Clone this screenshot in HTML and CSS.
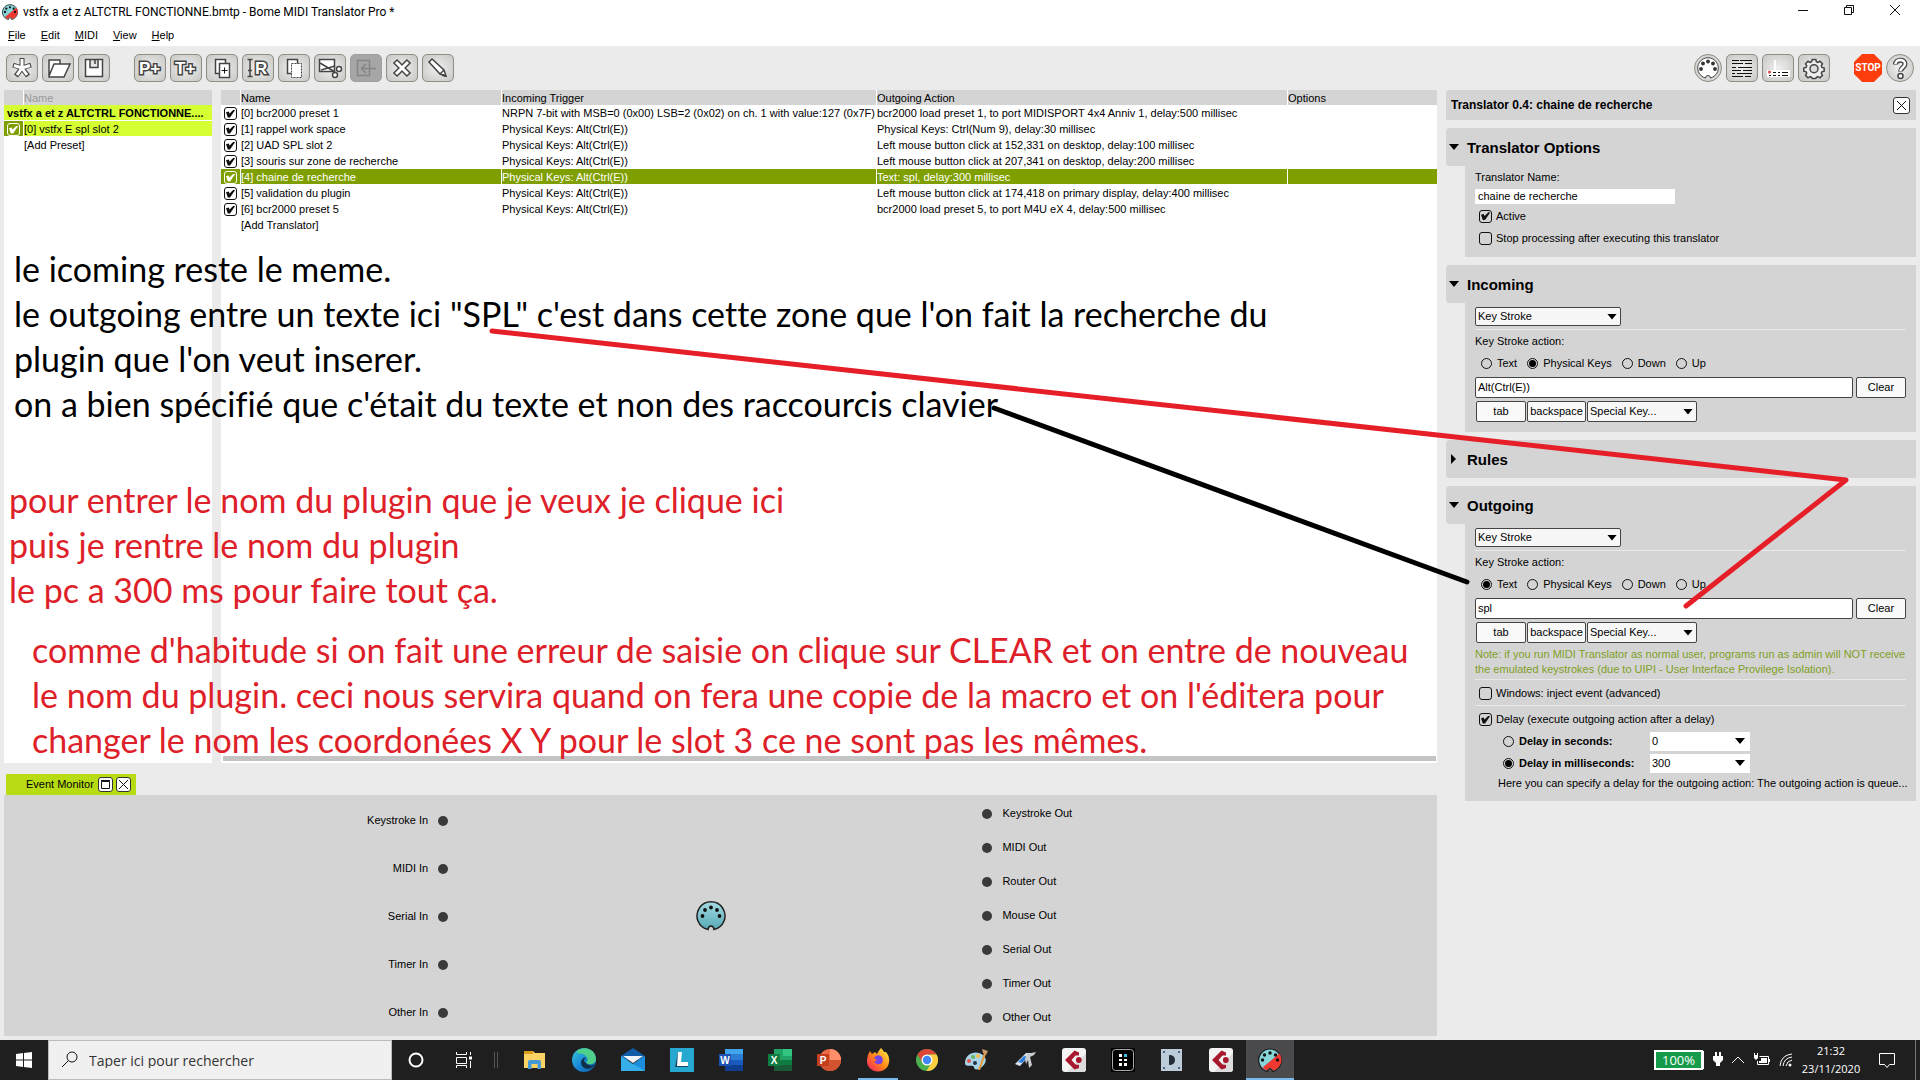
FILE: index.html
```html
<!DOCTYPE html>
<html lang="fr">
<head>
<meta charset="utf-8">
<title>Bome MIDI Translator Pro</title>
<link rel="stylesheet" href="styles.css">
</head>
<body>
<svg class="defs" width="0" height="0" aria-hidden="true">
  <defs>
    <linearGradient id="teal" x1="0" y1="0" x2="0" y2="1"><stop offset="0" stop-color="#a5dbe2"/><stop offset="1" stop-color="#55a9b5"/></linearGradient>
    <linearGradient id="edge" x1="0" y1="0" x2="1" y2="1"><stop offset="0" stop-color="#38c8d8"/><stop offset=".5" stop-color="#1b8ad6"/><stop offset="1" stop-color="#0c59a4"/></linearGradient>
    <linearGradient id="fox" x1="1" y1="0" x2="0" y2="1"><stop offset="0" stop-color="#fff44f"/><stop offset=".5" stop-color="#ff8a16"/><stop offset="1" stop-color="#f5156c"/></linearGradient>
    <symbol id="bome" viewBox="0 0 24 24">
      <path d="M9.500 23.300A11.300 11.300 0 1 1 14.500 23.300Q14.500 20.500 12 20.500T9.500 23.300Z" fill="#86d5d9" stroke="#1a1a1a" stroke-width="1.200"/>
      <path d="M21.500 5.500A11 11 0 0 1 14.800 22.500Q14.500 20 12 20T9.200 22.500A11 11 0 0 1 4.500 19.500Z" fill="#ee3830"/>
      <g fill="#111"><circle cx="12" cy="5" r="1.700"/><circle cx="6.500" cy="7" r="1.700"/><circle cx="17.500" cy="7" r="1.700"/><circle cx="4.500" cy="12" r="1.700"/><circle cx="19.500" cy="12" r="1.700"/></g>
    </symbol>
    <symbol id="cubase" viewBox="0 0 24 24">
      <rect width="24" height="24" rx="3" fill="#f4f4f4"/><path d="M24 5V21a3 3 0 0 1-3 3H5Z" fill="#dcdcdc"/>
      <path d="M12.500 2.500 17 4.500V7.500L13.500 7.500 9.500 12 13.500 16.500 17 17V20L12.500 21.500 3 12Z" fill="#a8182f"/><circle cx="16.800" cy="12" r="2.900" fill="#a8182f"/>
    </symbol>
  </defs>
</svg>
<div class="app">
  <header class="titlebar">
    <svg class="logo" width="16" height="18"><use href="#bome"/></svg>
    <h1 class="window-title">vstfx a et z ALTCTRL FONCTIONNE.bmtp - Bome MIDI Translator Pro *</h1>
    <div class="window-buttons">
      <button type="button" aria-label="Minimize"><svg width="10" height="10"><path d="M0 5.500H10" class="thin"/></svg></button>
      <button type="button" aria-label="Restore"><svg width="10" height="10"><path d="M.5 2.500H7.500V9.500H.5ZM2.500 2V.5H9.500V7.500H8" class="thin"/></svg></button>
      <button type="button" aria-label="Close"><svg width="10" height="10"><path d="M0 0 10 10M10 0 0 10" class="thin"/></svg></button>
    </div>
  </header>
  <nav class="menubar">
    <a href="#"><u>F</u>ile</a><a href="#"><u>E</u>dit</a><a href="#"><u>M</u>IDI</a><a href="#"><u>V</u>iew</a><a href="#"><u>H</u>elp</a>
  </nav>
  <div class="toolbar">
    <div class="tools">
      <button type="button" class="tool" aria-label="New"><svg width="30" height="26"><path d="M15 3V13L6 10M15 13 24 10M15 13 9 21M15 13 21 21" fill="none" stroke="#444" stroke-width="5"/><path d="M15 4V13L7 10.500M15 13 23 10.500M15 13 10 20M15 13 20 20" fill="none" stroke="#fff" stroke-width="3"/></svg></button>
      <button type="button" class="tool" aria-label="Open"><svg width="30" height="26"><path d="M6 21V5H17V9M6 21 11 9H27L21 22H6Z" class="ico"/></svg></button>
      <button type="button" class="tool" aria-label="Save"><svg width="30" height="26"><path d="M6.500 4.500H23.500V21.500H6.500ZM11 4.500V12.500H19V4.500M16 5V9" class="ico"/></svg></button>
    </div>
    <div class="tools">
      <button type="button" class="tool" aria-label="Add preset"><svg width="30" height="26"><text x="4" y="19" class="glyph">P+</text></svg></button>
      <button type="button" class="tool" aria-label="Add translator"><svg width="30" height="26"><text x="4" y="19" class="glyph">T+</text></svg></button>
      <button type="button" class="tool" aria-label="Duplicate"><svg width="30" height="26"><path d="M8.500 4.500H18.500V18.500H8.500Z" class="ico"/><path d="M12.500 8.500H22.500V22.500H12.500Z" class="ico"/><path d="M14.500 15.500H20.500M17.500 12.500V18.500" class="thin"/></svg></button>
      <button type="button" class="tool" aria-label="Rename"><svg width="30" height="26"><path d="M4.500 4.500H9.500M7 5V21M4.500 21.500H9.500M5 15.500H9" class="ico"/><text x="12" y="19" class="glyph">R</text></svg></button>
      <button type="button" class="tool" aria-label="Copy"><svg width="30" height="26"><path d="M8.500 4.500H18.500V18.500H8.500Z" class="ico"/><path d="M12.500 8.500H22.500V22.500H12.500Z" fill="#fff" stroke="#444" stroke-dasharray="2 1"/></svg></button>
      <button type="button" class="tool" aria-label="Cut"><svg width="30" height="26"><path d="M4.500 4.500H19.500V16.500H4.500Z" class="ico"/><path d="M5 8 20 17M6 15 20 11" class="ico"/><circle cx="24" cy="14" r="2.500" class="ico"/><circle cx="20" cy="20" r="2.500" class="ico"/></svg></button>
      <button type="button" class="tool off" aria-label="Paste" disabled><svg width="30" height="26"><path d="M6.500 5.500H18.500V20.500H6.500ZM10 13.500H25M15 9 10.500 13.500 15 18" fill="none" stroke="#858585" stroke-width="1.500"/></svg></button>
      <button type="button" class="tool" aria-label="Delete"><svg width="30" height="26"><path d="M8 6 22 20M22 6 8 20" stroke="#444" stroke-width="6"/><path d="M9 7 21 19M21 7 9 19" stroke="#fff" stroke-width="3"/></svg></button>
      <button type="button" class="tool" aria-label="Edit"><svg width="30" height="26"><path d="M6 7 9 4 21 15 23 21 17 19ZM17 19 21 15" class="ico"/><path d="M20 19 24 22 19 21Z" fill="#333"/></svg></button>
    </div>
    <div class="tools end">
      <button type="button" class="tool round" aria-label="MIDI ports"><svg width="26" height="26"><path d="M10.500 23A10.300 10.300 0 1 1 15.500 23Q15.500 20.500 13 20.500T10.500 23Z" fill="#fff" stroke="#444"/><g fill="#333"><circle cx="13" cy="6.500" r="1.900"/><circle cx="8" cy="8.500" r="1.900"/><circle cx="18" cy="8.500" r="1.900"/><circle cx="6" cy="14" r="1.900"/><circle cx="20" cy="14" r="1.900"/></g></svg></button>
      <button type="button" class="tool" aria-label="Log"><svg width="30" height="26"><path d="M5 5.500H12M13 5.500H25M5 8.500H16M18 8.500H25M5 12.500H9M11 12.500H25M5 15.500H14M16 15.500H25M5 18.500H8M10 18.500H25M5 21.500H16M18 21.500H24" class="thin"/></svg></button>
      <button type="button" class="tool" aria-label="Router"><svg width="30" height="26"><path d="M11 5H13V15H27V22H4V15H11Z" fill="#fff"/><circle cx="6.500" cy="17" r="1.500" fill="#d44"/><path d="M6 20.500H8M10 17.500H13M15 17.500H17M19 17.500H25M10 20.500H13M15 20.500H17M19 20.500H25" class="thin"/></svg></button>
      <button type="button" class="tool" aria-label="Settings"><svg width="30" height="26"><path d="M13.200 4.500h3.600l.6 2.300 1.500.7 2.100-1.200 2.500 2.500-1.200 2.100.7 1.500 2.200.6v3.200l-2.300.6-.6 1.500 1.200 2.100-2.500 2.500-2.100-1.200-1.500.6-.6 1.200h-3.600l-.6-1.200-1.500-.6-2.100 1.200-2.500-2.500 1.200-2.100-.6-1.500-2.300-.6v-3.200l2.300-.6.6-1.500-1.200-2.100 2.500-2.500 2.100 1.200 1.500-.7Z" fill="#eee" stroke="#444" stroke-width="1.500"/><circle cx="15" cy="13.700" r="4" fill="#ddd" stroke="#444" stroke-width="1.500"/></svg></button>
    </div>
    <div class="tools stops">
      <button type="button" class="stop">STOP</button>
      <button type="button" class="tool round" aria-label="Help"><svg width="26" height="26"><g fill="none"><path d="M8.500 9.500C8.500 3.500 18 4 18 9 18 12.500 13.500 12.500 13.500 16.500" stroke="#444" stroke-width="5"/><path d="M8.500 9C8.500 3.500 18 4 18 9 18 12.500 13.500 12.500 13.500 16" stroke="#fff" stroke-width="2.500"/></g><circle cx="13.500" cy="21" r="2.500" class="ico"/></svg></button>
    </div>
  </div>

  <div class="workspace">
    <div class="center">
      <div class="lists">
        <section class="pane presets">
          <table class="grid">
            <colgroup><col class="c-check"><col></colgroup>
            <thead><tr><th></th><th class="dim">Name</th></tr></thead>
            <tbody>
              <tr class="project"><td colspan="2">vstfx a et z ALTCTRL FONCTIONNE....</td></tr>
              <tr class="current"><td class="tick"><input type="checkbox" class="box" aria-label="vstfx E spl slot 2" checked></td><td>[0] vstfx E spl slot 2</td></tr>
              <tr><td></td><td>[Add Preset]</td></tr>
            </tbody>
          </table>
        </section>
        <section class="pane translators">
          <table class="grid">
            <colgroup><col class="c-check"><col class="c-name"><col class="c-in"><col class="c-out"><col></colgroup>
            <thead><tr><th></th><th>Name</th><th>Incoming Trigger</th><th>Outgoing Action</th><th>Options</th></tr></thead>
            <tbody>
              <tr><td class="tick"><input type="checkbox" class="box" aria-label="0" checked></td><td>[0] bcr2000 preset 1</td><td>NRPN 7-bit with MSB=0 (0x00) LSB=2 (0x02) on ch. 1 with value:127 (0x7F)</td><td>bcr2000 load preset 1, to port MIDISPORT 4x4 Anniv 1, delay:500 millisec</td><td></td></tr>
              <tr><td class="tick"><input type="checkbox" class="box" aria-label="1" checked></td><td>[1] rappel work space</td><td>Physical Keys: Alt(Ctrl(E))</td><td>Physical Keys: Ctrl(Num 9), delay:30 millisec</td><td></td></tr>
              <tr><td class="tick"><input type="checkbox" class="box" aria-label="2" checked></td><td>[2] UAD SPL slot 2</td><td>Physical Keys: Alt(Ctrl(E))</td><td>Left mouse button click at 152,331 on desktop, delay:100 millisec</td><td></td></tr>
              <tr><td class="tick"><input type="checkbox" class="box" aria-label="3" checked></td><td>[3] souris sur zone de recherche</td><td>Physical Keys: Alt(Ctrl(E))</td><td>Left mouse button click at 207,341 on desktop, delay:200 millisec</td><td></td></tr>
              <tr class="selected"><td class="tick"><input type="checkbox" class="box" aria-label="4" checked></td><td>[4] chaine de recherche</td><td>Physical Keys: Alt(Ctrl(E))</td><td>Text: spl, delay:300 millisec</td><td></td></tr>
              <tr><td class="tick"><input type="checkbox" class="box" aria-label="5" checked></td><td>[5] validation du plugin</td><td>Physical Keys: Alt(Ctrl(E))</td><td>Left mouse button click at 174,418 on primary display, delay:400 millisec</td><td></td></tr>
              <tr><td class="tick"><input type="checkbox" class="box" aria-label="6" checked></td><td>[6] bcr2000 preset 5</td><td>Physical Keys: Alt(Ctrl(E))</td><td>bcr2000 load preset 5, to port M4U eX 4, delay:500 millisec</td><td></td></tr>
              <tr><td></td><td>[Add Translator]</td><td></td><td></td><td></td></tr>
            </tbody>
          </table>
          <div class="hscroll"></div>
        </section>
      </div>
      <section class="monitor">
        <div class="tab">
          <h2>Event Monitor</h2>
          <button type="button" class="mini" aria-label="Maximize"><svg width="13" height="13"><path d="M2.500 3.500H10.500V10.500H2.500ZM2 2.500H11" class="thin"/></svg></button>
          <button type="button" class="mini" aria-label="Close monitor"><svg width="13" height="13"><path d="M2 2 11 11M11 2 2 11" class="thin"/></svg></button>
        </div>
        <div class="events">
          <ul class="ins"><li>Keystroke In</li><li>MIDI In</li><li>Serial In</li><li>Timer In</li><li>Other In</li></ul>
          <svg class="din" width="30" height="30"><path d="M12 28.500A14 14 0 1 1 18 28.500Q17.500 25 15 25T12 28.500Z" fill="url(#teal)" stroke="#222" stroke-width="1.500"/><g fill="#111"><circle cx="15" cy="6.500" r="1.900"/><circle cx="9" cy="9" r="1.900"/><circle cx="21" cy="9" r="1.900"/><circle cx="6.500" cy="15" r="1.900"/><circle cx="23.500" cy="15" r="1.900"/></g></svg>
          <ul class="outs"><li>Keystroke Out</li><li>MIDI Out</li><li>Router Out</li><li>Mouse Out</li><li>Serial Out</li><li>Timer Out</li><li>Other Out</li></ul>
        </div>
      </section>
    </div>

    <aside class="inspector">
      <div class="crumb"><h2>Translator 0.4: chaine de recherche</h2><button type="button" class="mini big" aria-label="Close panel"><svg width="15" height="15"><path d="M3 3 12 12M12 3 3 12" class="thin"/></svg></button></div>

      <section class="card">
        <h3>Translator Options</h3>
        <div class="card-body options">
          <label class="name-label" for="tname">Translator Name:</label>
          <input class="name-input" id="tname" type="text" value="chaine de recherche">
          <label class="line check"><input type="checkbox" class="box" checked>Active</label>
          <label class="line check"><input type="checkbox" class="box">Stop processing after executing this translator</label>
        </div>
      </section>

      <section class="card">
        <h3>Incoming</h3>
        <div class="card-body">
          <div class="drop kind"><select aria-label="Incoming type"><option>Key Stroke</option></select></div>
          <div class="rule action">Key Stroke action:</div>
          <div class="line radios">
            <label><input type="radio" name="in" class="dot">Text</label><label><input type="radio" name="in" class="dot" checked>Physical Keys</label><label><input type="radio" name="in" class="dot">Down</label><label><input type="radio" name="in" class="dot">Up</label>
          </div>
          <div class="keys"><input type="text" aria-label="Incoming keys" value="Alt(Ctrl(E))"><button type="button" class="btn">Clear</button></div>
          <div class="specials"><button type="button" class="btn">tab</button><button type="button" class="btn wide">backspace</button><div class="drop special"><select aria-label="Incoming special key"><option>Special Key...</option></select></div></div>
        </div>
      </section>

      <section class="card closed"><h3>Rules</h3></section>

      <section class="card">
        <h3>Outgoing</h3>
        <div class="card-body">
          <div class="drop kind"><select aria-label="Outgoing type"><option>Key Stroke</option></select></div>
          <div class="rule action">Key Stroke action:</div>
          <div class="line radios">
            <label><input type="radio" name="out" class="dot" checked>Text</label><label><input type="radio" name="out" class="dot">Physical Keys</label><label><input type="radio" name="out" class="dot">Down</label><label><input type="radio" name="out" class="dot">Up</label>
          </div>
          <div class="keys"><input type="text" aria-label="Outgoing keys" value="spl"><button type="button" class="btn">Clear</button></div>
          <div class="specials"><button type="button" class="btn">tab</button><button type="button" class="btn wide">backspace</button><div class="drop special"><select aria-label="Outgoing special key"><option>Special Key...</option></select></div></div>
          <p class="note">Note: if you run MIDI Translator as normal user, programs run as admin will NOT receive<br>the emulated keystrokes (due to UIPI - User Interface Provilege Isolation).</p>
          <div class="rule inject"><label class="check"><input type="checkbox" class="box">Windows: inject event (advanced)</label></div>
          <div class="rule delay"><label class="check"><input type="checkbox" class="box" checked>Delay (execute outgoing action after a delay)</label></div>
          <div class="line delay-row"><label><input type="radio" name="delay" class="dot">Delay in seconds:</label><div class="drop plain"><select aria-label="Seconds"><option>0</option></select></div></div>
          <div class="line delay-row"><label><input type="radio" name="delay" class="dot" checked>Delay in milliseconds:</label><div class="drop plain"><select aria-label="Milliseconds"><option>300</option></select></div></div>
          <p class="hint">Here you can specify a delay for the outgoing action: The outgoing action is queue...</p>
        </div>
      </section>
    </aside>
  </div>

  <footer class="taskbar">
    <button type="button" class="task" aria-label="Start"><svg width="16" height="16" fill="#fff"><path d="M0 2 7 1V7.500H0ZM8 1 16 0V7.500H8ZM0 8.500H7V15L0 14ZM8 8.500H16V16L8 15Z"/></svg></button>
    <label class="search"><svg width="18" height="18"><circle cx="11" cy="6" r="5" class="thin"/><path d="M7.500 9.500 1 16" class="thin"/></svg><input type="text" placeholder="Taper ici pour rechercher" aria-label="Taper ici pour rechercher"></label>
    <button type="button" class="task" aria-label="Cortana"><svg width="16" height="16"><circle cx="8" cy="8" r="6.500" fill="none" stroke="#fff" stroke-width="2"/></svg></button>
    <button type="button" class="task" aria-label="Task view"><svg width="16" height="16" fill="none" stroke="#fff"><path d="M.5 0V2.500H10.500V0M.5 5.500H10.500V11.500H.5ZM.5 16V13.500H10.500V16M14.500 0V3M14.500 9V16"/><path d="M13 6H16" stroke-width="3"/></svg></button>
    <span class="grip"></span>
    <div class="apps">
      <button type="button" class="task" aria-label="Explorer"><svg width="24" height="24"><path d="M1 3H10L12 5H22V20H1Z" fill="#fbd264"/><path d="M1 3H10V6H1Z" fill="#dc9c1c"/><path d="M5 21V14Q5 12 7 12H16Q18 12 18 14V21H14.500V16H8.500V21Z" fill="#4599d6"/></svg></button>
      <button type="button" class="task" aria-label="Edge"><svg width="24" height="24"><circle cx="12" cy="12" r="12" fill="url(#edge)"/><path d="M5 3C12-3 24 1 24 11 24 17 16 17 14 15 18 11 14 5 5 5Z" fill="#4fd08a"/><path d="M14 15C16 18 21 18 23 16 20 23 10 22 9 15 9 11 12 9 14 10 11 12 12 14 14 15Z" fill="#10304a"/></svg></button>
      <button type="button" class="task" aria-label="Mail"><svg width="24" height="24"><path d="M0 8 12 0 24 8V12H0Z" fill="#0f5ca8"/><path d="M0 8 12 16 24 8V23H0Z" fill="#36aee9"/><path d="M12 16 24 8V23Z" fill="#1d8edb"/><path d="M2 8H22L12 15Z" fill="#f0f4f8"/></svg></button>
      <button type="button" class="task" aria-label="L"><svg width="24" height="24"><path d="M0 0H24V24H0Z" fill="#27a8d0"/><path d="M8 4 5 19H18V15L12 18Z" fill="#12486a"/><path d="M8 4H12L11 14H18V18H7Z" fill="#fff"/></svg></button>
      <button type="button" class="task" aria-label="Word"><svg width="24" height="24"><path d="M6 1H24V23H6Z" fill="#2b7cd3"/><path d="M6 1H24V6H6Z" fill="#41a5ee"/><path d="M6 12H24V17H6Z" fill="#185abd"/><path d="M6 17H24V23H6Z" fill="#103f91"/><path d="M0 6H12V18H0Z" fill="#1b52b0"/><text x="6" y="16" class="office">W</text></svg></button>
      <button type="button" class="task" aria-label="Excel"><svg width="24" height="24"><path d="M6 1H24V23H6Z" fill="#21a366"/><path d="M15 1H24V8H15Z" fill="#33c481"/><path d="M6 12H24V17H6Z" fill="#107c41"/><path d="M6 17H24V23H6Z" fill="#185c37"/><path d="M0 6H12V18H0Z" fill="#107c41"/><text x="6" y="16" class="office">X</text></svg></button>
      <button type="button" class="task" aria-label="PowerPoint"><svg width="24" height="24"><circle cx="13" cy="12" r="11" fill="#ed6c47"/><path d="M13 1A11 11 0 0 1 24 12H13Z" fill="#ff8f6b"/><path d="M24 12A11 11 0 0 1 2 12Z" fill="#d35230"/><path d="M0 6H12V18H0Z" fill="#c43e1c"/><text x="6" y="16" class="office">P</text></svg></button>
      <button type="button" class="task open" aria-label="Firefox"><svg width="24" height="24"><path d="M1 12Q1 7 4 3L6 6 9 4 11 6Q13 2 15 0 17 2 18 4L20 4Q24 9 23 14A11 10 0 0 1 1 13Z" fill="url(#fox)"/><path d="M8 10Q10 6 15 8 18 11 16 15 12 18 8 14L11 12Z" fill="#7542e5"/></svg></button>
      <button type="button" class="task" aria-label="Chrome"><svg width="24" height="24"><circle cx="12" cy="12" r="11" fill="#4caf50"/><path d="M2.500 6.500A11 11 0 0 1 21.500 6.500H12L7.500 14.500Z" fill="#db4437"/><path d="M21.500 6.500A11 11 0 0 1 11.500 23L16.500 14.500 14.500 6.500Z" fill="#ffcd40"/><circle cx="12" cy="12" r="5.500" fill="#fff"/><circle cx="12" cy="12" r="4.200" fill="#4285f4"/></svg></button>
      <button type="button" class="task" aria-label="Paint"><svg width="24" height="24"><path d="M1 15C1 7 9 3 15 5 22 7 24 13 19 18 14 23 10 22 10 19 9 16 1 20 1 15Z" fill="#a9d5ea"/><circle cx="5" cy="13" r="2" fill="#e2574c"/><circle cx="9" cy="9" r="2" fill="#6cb85c"/><circle cx="14" cy="8" r="2" fill="#f3c04b"/><circle cx="11" cy="15" r="2" fill="#234"/><path d="M14 22 20 5 22 6 16 22Z" fill="#e59a3c"/><path d="M18 1 24 3 22 7 19 5Z" fill="#c99a6b"/></svg></button>
      <button type="button" class="task" aria-label="Tools"><svg width="24" height="24"><path d="M2 16 13 5 18 5 16 8 7 18Z" fill="#d7e2ee"/><path d="M5 14 11 8 15 9 9 15Z" fill="#2d7ed8"/><path d="M14 6 23 4 21 7 17 9 19 17 16 20 15 12 13 16 12 11Z" fill="#c9cdd2"/></svg></button>
      <button type="button" class="task" aria-label="Cubase"><svg width="24" height="24"><use href="#cubase"/></svg></button>
      <button type="button" class="task" aria-label="Pads"><svg width="24" height="24"><path d="M0 0H24V24H0Z" fill="#000"/><rect x="1.500" y="1.500" width="21" height="21" rx="3" fill="none" stroke="#aaa"/><path d="M8 6H11V9H8ZM8 11H11V13H8ZM13 11H16V13H13ZM8 15H11V18H8ZM13 15H16V18H13Z" fill="#fff"/><path d="M13 6H16V9H13Z" fill="#3ac0dd"/></svg></button>
      <button type="button" class="task" aria-label="D"><svg width="24" height="24"><path d="M1 1H22V23H1Z" fill="#bccbd9"/><path d="M9 7Q15 7 15 12T9 17Z" fill="#222c38"/><g fill="#345"><circle cx="4" cy="4" r="1"/><circle cx="19" cy="4" r="1"/><circle cx="4" cy="20" r="1"/><circle cx="19" cy="20" r="1"/></g></svg></button>
      <button type="button" class="task" aria-label="Cubase 2"><svg width="24" height="24"><use href="#cubase"/></svg></button>
      <button type="button" class="task active" aria-label="Bome MIDI Translator"><svg width="24" height="24"><use href="#bome"/></svg></button>
    </div>
    <div class="tray">
      <span class="battery">100%</span>
      <svg width="10" height="16" fill="#fff"><path d="M2 0H4V4H6V0H8V4H10V8L7 11V14H3V11L0 8V4H2Z"/></svg>
      <svg width="14" height="8"><path d="M1 7 7 1 13 7" class="lite"/></svg>
      <svg width="18" height="14"><path d="M6.500 3.500H15.500V11.500H4.500V8" class="lite"/><path d="M8 5H14V10H6V8H8ZM16 6H17V9H16ZM1 2H5V5L3 7 1 5Z" fill="#fff"/><path d="M1.500 0V3M4.500 0V3" class="lite"/></svg>
      <svg width="14" height="14"><path d="M1 13Q2 2 13 1M4 13Q5 5 13 4M7 13Q8 8 13 7" class="lite"/><circle cx="11" cy="12" r="1.500" fill="#fff"/></svg>
      <time class="clock">21:32<br>23/11/2020</time>
      <svg class="bell" width="16" height="17"><path d="M.5 1.500H15.500V12.500H10.500L8 15.500 5.500 12.500H.5Z" class="lite"/></svg>
      <span class="peek"></span>
    </div>
  </footer>

  <div class="notes">
    <svg class="arrows"><g fill="none" stroke-width="5" stroke-linecap="round" stroke-linejoin="round"><path d="M492 331 1846 480 1686 606" stroke="#e61e28"/><path d="M994 408 1467 582" stroke="#000"/></g></svg>
    <p class="memo m1">le icoming reste le meme.<br>le outgoing entre un texte ici "SPL" c'est dans cette zone que l'on fait la recherche du<br>plugin que l'on veut inserer.<br>on a bien spécifié que c'était du texte et non des raccourcis clavier</p>
    <p class="memo red m2">pour entrer le nom du plugin que je veux je clique ici<br>puis je rentre le nom du plugin<br>le pc a 300 ms pour faire tout ça.</p>
    <p class="memo red m3">comme d'habitude si on fait une erreur de saisie on clique sur CLEAR et on entre de nouveau<br>le nom du plugin. ceci nous servira quand on fera une copie de la macro et on l'éditera pour<br>changer le nom les coordonées X Y pour le slot 3 ce ne sont pas les mêmes.</p>
  </div>
</div>
</body>
</html>
```
FILE: styles.css
```css
* { box-sizing: border-box; }
body, h1, h2, h3, p, ul { margin: 0; padding: 0; }
body { font: 11px/15px "Liberation Sans", Arial, sans-serif; color: #000; background: #ebebeb; }
button, input, select { font: inherit; color: inherit; margin: 0; padding: 0; border: 0; background: none; border-radius: 0; outline: 0; }
svg { display: block; flex: none; }
a { color: inherit; text-decoration: none; }
.defs { position: absolute; }
.app { position: relative; min-height: 100vh; display: flex; flex-direction: column; overflow: hidden; }
.thin { fill: none; stroke: #111; }
.lite { fill: none; stroke: #fff; }
.ico { fill: #fff; stroke: #444; stroke-width: 1.5; }
.glyph { font: bold 17px "Liberation Sans", sans-serif; fill: #fff; stroke: #444; stroke-width: 3; paint-order: stroke; }
.office { font: bold 10px "Liberation Sans", sans-serif; fill: #fff; text-anchor: middle; }

.titlebar { display: flex; align-items: center; height: 24px; padding: 0 2px; gap: 5px; background: #fff; }
.window-title { flex: 1; font: 12px/24px Roboto, sans-serif; }
.window-buttons { display: flex; align-self: flex-start; }
.window-buttons button { width: 46px; height: 20px; display: grid; place-items: center; }
.menubar { display: flex; gap: 15px; height: 22px; padding: 4px 8px; background: #fff; }

.toolbar { display: flex; padding: 8px 6px; height: 44px; gap: 24px; }
.tools { display: flex; gap: 4px; }
.stops { gap: 4px; }
.end { margin-left: auto; }
.tool { width: 32px; height: 28px; border: 1px solid #8e8e86; border-radius: 5px; background: radial-gradient(#f0f0f0, #c6c6c2); display: grid; place-items: center; }
.round { width: 28px; border-radius: 50%; }
.off { background: #a6a6a6; border-color: #a0a0a0; }
.stop { width: 28px; height: 28px; background: #ff3d0c; color: #fff; font: bold 10px/28px Roboto, sans-serif; text-align: center; clip-path: polygon(29% 0, 71% 0, 100% 29%, 100% 71%, 71% 100%, 29% 100%, 0 71%, 0 29%); }

.workspace { flex: 1; display: flex; gap: 9px; padding: 0 4px 4px; }
.center { flex: 1; min-width: 0; display: flex; flex-direction: column; }
.lists { flex: 1; display: flex; gap: 9px; }
.pane { background: #fff; display: flex; flex-direction: column; }
.presets { width: 208px; }
.translators { flex: 1; min-width: 0; }
.grid { width: 100%; table-layout: fixed; border-collapse: separate; border-spacing: 0; line-height: 13px; }
.grid th { height: 15px; background: #d4d4d4; font-weight: normal; text-align: left; padding: 2px 0 0; border-left: 1px solid #fff; }
.grid td { height: 16px; padding: 2px 0 0; border-left: 1px solid #fff; border-bottom: 1px solid #fff; white-space: nowrap; overflow: hidden; }
.grid th:first-child, .grid td:first-child { border-left: 0; }
.grid .dim { color: #999; }
.c-check { width: 19px; }
.c-name { width: 261px; }
.c-in { width: 375px; }
.c-out { width: 411px; }
.tick .box { margin-left: 3px; }
.project td { background: #d6ff33; font-weight: bold; }
.grid .project td { padding-left: 3px; }
.current td { background: #d6ff33; }
.grid .current .tick { background: #7f9f00; }
.selected td { background: #7f9f00; color: #fff; }
.hscroll { height: 5px; margin: auto 1px 2px 2px; background: #c4c4c4; }

.box { appearance: none; width: 13px; height: 13px; border: 1px solid #111; border-radius: 3px; display: grid; place-items: center; flex: none; }
.box:checked::before { content: ""; width: 9px; height: 8px; background: #111; clip-path: polygon(0 35%, 30% 25%, 40% 50%, 85% 0, 100% 10%, 45% 100%, 20% 100%); }
.current .box, .selected .box { border-color: #fff; }
.current .box::before, .selected .box::before { background: #fff; }
.dot { appearance: none; width: 11px; height: 11px; border: 1px solid #111; border-radius: 50%; display: grid; place-items: center; flex: none; }
.dot:checked::before { content: ""; width: 7px; height: 7px; border-radius: 50%; background: #000; }

.monitor { margin-top: 11px; }
.tab { display: flex; align-items: center; gap: 3px; width: 130px; height: 21px; margin-left: 2px; padding-left: 20px; background: #b8dc14; }
.tab h2 { font: inherit; margin-right: 1px; }
.mini { width: 15px; height: 15px; border: 1px solid #333; border-radius: 3px; background: #fff; display: grid; place-items: center; }
.big { width: 17px; height: 17px; }
.events { display: grid; grid-template-columns: 31% 37% 32%; height: 241px; background: #d4d4d4; align-items: start; }
.events ul { list-style: none; display: flex; flex-direction: column; }
.events li { display: flex; align-items: center; gap: 10px; height: 15px; }
.events li::before { content: ""; width: 10px; height: 10px; border-radius: 50%; background: #3a3a3a; }
.ins { gap: 33px; padding-top: 18px; }
.ins li { flex-direction: row-reverse; }
.outs { gap: 19px; }
.events .outs { padding: 11px 0 0 4px; }
.events .ins { padding-top: 18px; }
.din { place-self: center; margin-right: 4px; }

.inspector { width: 470px; display: flex; flex-direction: column; gap: 8px; }
.crumb { display: flex; align-items: center; justify-content: space-between; height: 30px; padding: 0 6px 0 5px; background: #d4d4d4; border-radius: 4px 0 0 0; }
.crumb h2 { font-size: 12px; }
.card h3 { display: flex; align-items: center; gap: 8px; height: 38px; padding-left: 3px; background: #d4d4d4; font-size: 15px; border-radius: 4px 0 0 4px; }
.card h3::before { content: ""; width: 10px; height: 6px; background: #000; clip-path: polygon(0 0, 100% 0, 50% 100%); }
.card.closed h3::before { clip-path: polygon(20% 0, 70% 50%, 20% 100%); height: 10px; }
.card-body { margin-left: 19px; padding: 4px 10px 10px; background: #d4d4d4; }
.options { padding-bottom: 8px; }
.line { display: flex; align-items: center; height: 22px; }
.name-label { display: block; height: 19px; }
.name-input { display: block; width: 200px; height: 15px; margin-bottom: 1px; background: #fff; padding: 0 3px; }
.check { display: flex; align-items: center; gap: 4px; padding-left: 4px; }
.drop { position: relative; height: 19px; border: 1px solid #444; border-radius: 2px; background: #f7f7f7; }
.drop select { appearance: none; display: block; width: 100%; height: 100%; padding: 0 2px; }
.drop::after { content: ""; position: absolute; right: 3px; top: calc(50% - 3px); width: 10px; height: 6px; background: #000; clip-path: polygon(0 0, 100% 0, 50% 100%); pointer-events: none; }
.kind { width: 146px; margin-bottom: 3px; }
.rule { border-top: 1px solid #e8e8e8; }
.action { height: 23px; padding-top: 4px; }
.radios { gap: 10px; padding-left: 6px; }
.radios label, .delay-row label { display: flex; align-items: center; gap: 5px; }
.keys { display: flex; gap: 3px; margin-top: 3px; height: 21px; }
.keys input { flex: 1; min-width: 0; border: 1px solid #444; border-radius: 2px; background: #fff; padding: 0 2px; }
.btn { width: 50px; height: 21px; border: 1px solid #444; border-radius: 2px; background: #f9f9f9; text-align: center; }
.btn.wide { width: 59px; }
.specials { display: flex; gap: 1px; margin: 3px 0 0 1px; }
.special { width: 110px; height: 21px; }
.note { margin-top: 4px; color: #7f9f1f; white-space: nowrap; }
.inject { height: 26px; margin-top: 2px; padding-top: 6px; }
.delay { height: 25px; padding-top: 6px; }
.delay-row { padding-left: 28px; }
.delay-row label { width: 147px; font-weight: bold; }
.plain { width: 100px; border: 0; border-radius: 0; background: #fff; }
.plain::after { right: 5px; }
.hint { padding: 2px 0 0 23px; white-space: nowrap; }

.taskbar { display: flex; height: 40px; background: #1f1f20; color: #fff; font-family: "Open Sans", sans-serif; }
.task { width: 48px; height: 40px; display: grid; place-items: center; }
.search { width: 344px; display: flex; align-items: center; gap: 10px; padding-left: 12px; background: #f0f0f0; border: 1px solid #bbb; color: #333; font-size: 14px; }
.search input { flex: 1; }
.search input::placeholder { color: #333; opacity: 1; }
.grip { width: 4px; height: 16px; margin: 12px 13px 0 6px; border: solid #555; border-width: 0 1px; }
.apps { display: flex; gap: 1px; }
.open { background: linear-gradient(#76b9ed, #76b9ed) center bottom / 40px 2px no-repeat; }
.active { background: linear-gradient(#76b9ed, #76b9ed) center bottom / 100% 2px no-repeat #4b4a4c; }
.tray { display: flex; align-items: center; margin-left: auto; gap: 8px; }
.battery { width: 49px; height: 20px; margin-right: 2px; border: 2px solid #fff; background: #169b4b; box-shadow: 2px 0 0 -1px #fff; font-size: 13px; line-height: 16px; text-align: center; }
.clock { width: 60px; font-size: 11px; line-height: 18px; text-align: center; white-space: nowrap; }
.bell { margin-left: 10px; }
.peek { width: 5px; height: 40px; margin-left: 12px; border-left: 1px solid #777; }

/* hand-placed annotations lie over the whole window */
.notes { position: absolute; inset: 0; pointer-events: none; }
.arrows { width: 100%; height: 100%; }
.memo { position: absolute; font: 34px/45px Lato, sans-serif; font-variant-ligatures: none; white-space: nowrap; }
.red { color: #de2029; }
.m1 { left: 14px; top: 246px; }
.m2 { left: 9px; top: 477px; }
.m3 { left: 32px; top: 627px; }
```
